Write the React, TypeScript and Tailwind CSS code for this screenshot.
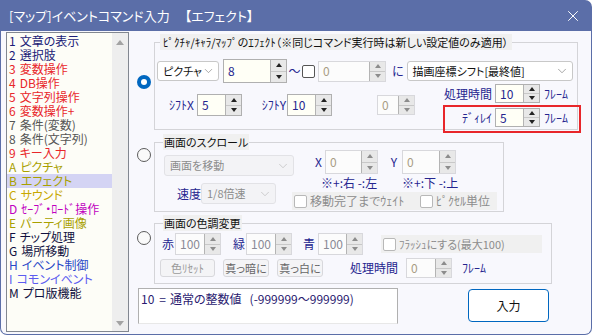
import { ChevronDown, X } from 'lucide-react';

const items: [string, string, string][] = [
  ['1', '文章の表示', 'text-[#1c1c78]'],
  ['2', '選択肢', 'text-[#1c1c78]'],
  ['3', '変数操作', 'text-[#e8262a]'],
  ['4', 'DB操作', 'text-[#e8262a]'],
  ['5', '文字列操作', 'text-[#e8262a]'],
  ['6', '変数操作+', 'text-[#e8262a]'],
  ['7', '条件(変数)', 'text-[#555555]'],
  ['8', '条件(文字列)', 'text-[#555555]'],
  ['9', 'キー入力', 'text-[#e8262a]'],
  ['A', 'ピクチャ', 'text-[#a8a000]'],
  ['B', 'エフェクト', 'text-[#a8a000]'],
  ['C', 'サウンド', 'text-[#c8a800]'],
  ['D', 'ｾｰﾌﾞ・ﾛｰﾄﾞ操作', 'text-[#c000c0]'],
  ['E', 'パーティ画像', 'text-[#a8a000]'],
  ['F', 'チップ処理', 'text-[#101040]'],
  ['G', '場所移動', 'text-[#101040]'],
  ['H', 'イベント制御', 'text-[#2848c8]'],
  ['I', 'コモンイベント', 'text-[#5c5cf0]'],
  ['M', 'プロ版機能', 'text-[#101040]'],
];

function Tri({ up, dim }: { up?: boolean; dim?: boolean }) {
  return (
    <span
      className={`w-0 h-0 border-x-[3.5px] border-x-transparent ${
        up
          ? dim
            ? 'border-b-[4px] border-b-[#8c8c8c]'
            : 'border-b-[4px] border-b-[#222]'
          : dim
          ? 'border-t-[4px] border-t-[#8c8c8c]'
          : 'border-t-[4px] border-t-[#222]'
      }`}
    />
  );
}

function Spin({ v, size, dim = false, tone }: { v: string; size: string; dim?: boolean; tone?: string }) {
  return (
    <div className={`flex shrink-0 border ${dim ? 'border-[#d8d8dc]' : 'border-[#b0b0b0]'} ${size}`}>
      <div
        className={`flex-1 flex items-center pl-[4px] text-[12px] ${
          dim ? 'bg-[#fcfcfc]' : 'bg-[#fffff6]'
        } ${tone ?? (dim ? 'text-[#a89c84]' : 'text-[#25258f]')}`}
      >
        {v}
      </div>
      <div className="w-[16px] flex flex-col border-l border-[#b4b4b4] bg-[#e8e8e8]">
        <div className="flex-1 flex items-center justify-center border-b border-[#c8c8c8]">
          <Tri up dim={dim} />
        </div>
        <div className="flex-1 flex items-center justify-center">
          <Tri dim={dim} />
        </div>
      </div>
    </div>
  );
}

function Sel({ t, size, dim = false }: { t: string; size: string; dim?: boolean }) {
  return (
    <div
      className={`flex items-center justify-between shrink-0 border rounded-[3px] pl-[5px] pr-[3px] ${size} ${
        dim ? 'bg-[#f3f3f6] border-[#e2e2e6] text-[#8c8c8c]' : 'bg-white border-[#c8c8c8] text-[#111]'
      }`}
    >
      <span className="whitespace-nowrap">{t}</span>
      <ChevronDown size={14} strokeWidth={1} className={dim ? 'text-[#b0b0b0]' : 'text-[#666]'} />
    </div>
  );
}

function Check({ dim = false }: { dim?: boolean }) {
  return (
    <span
      className={`w-[13px] h-[13px] shrink-0 rounded-[2px] border bg-white ${
        dim ? 'border-[#b8b8b8]' : 'border-[#555]'
      }`}
    />
  );
}

function Radio({ on = false }: { on?: boolean }) {
  return on ? (
    <span className="w-[14px] h-[14px] rounded-full bg-[#0067c0] flex items-center justify-center">
      <span className="w-[6px] h-[6px] rounded-full bg-white" />
    </span>
  ) : (
    <span className="block w-[14px] h-[14px] rounded-full border border-[#5c5c5c] bg-[#fafafa]" />
  );
}

function Group({
  label,
  lcls,
  cls,
  children,
}: {
  label: string;
  lcls: string;
  cls: string;
  children: React.ReactNode;
}) {
  return (
    <div className={`relative border border-[#d4d4d8] shrink-0 ${cls}`}>
      <span
        className={`absolute -top-[9px] h-[16px] leading-[16px] bg-[#f0f0f0] text-[#111] whitespace-nowrap ${lcls}`}
      >
        {label}
      </span>
      {children}
    </div>
  );
}

export default function App() {
  const navy = 'text-[#25258f] text-[12px] whitespace-nowrap';
  return (
    <div className="w-[592px] h-[335px] flex flex-col bg-white text-[11px] leading-none font-['Noto_Sans_CJK_JP','Noto_Sans',sans-serif] [font-feature-settings:'palt']">
      {/* title bar */}
      <div className="h-[31px] shrink-0 bg-[#5b6ea8] rounded-tr-[7px] flex items-center pl-[9px] pr-[10px] text-white text-[13px]">
        <span>[マップ]イベントコマンド入力</span>
        <span className="ml-[15px]">【エフェクト】</span>
        <X size={18} strokeWidth={1.3} className="ml-auto" />
      </div>

      <div className="flex-1 flex bg-[#f8f8fd] border-x border-b border-[#5b6ea8] rounded-b-[7px]">
        {/* command list */}
        <div className="ml-[5px] mt-[1px] w-[123px] h-[300px] border border-[#828790] bg-[#fdfdf7] flex text-[12px]">
          <div className="flex-1 pt-[1px]">
            {items.map(([k, t, c]) => (
              <div
                key={k}
                className={`flex h-[14px] leading-[14px] pl-[2px] whitespace-nowrap ${c} ${
                  k === 'B' ? 'bg-[#d4d4f4]' : ''
                }`}
              >
                <span>{k}</span>
                <span className="ml-[4px]">{t}</span>
              </div>
            ))}
          </div>
          <div className="w-[16px] bg-[#eeeeee] flex flex-col items-center justify-between pt-[7px] pb-[5px]">
            <span className="w-0 h-0 border-x-[4px] border-x-transparent border-b-[5px] border-b-[#a3a3a3]" />
            <span className="w-0 h-0 border-x-[4px] border-x-transparent border-t-[5px] border-t-[#a3a3a3]" />
          </div>
        </div>

        {/* settings */}
        <div className="flex flex-col pt-[11px] pl-[1px]">
          {/* picture / chara / map effect */}
          <div className="flex">
            <div className="w-[24px] pt-[33px] pl-[7px]">
              <Radio on />
            </div>
            <Group
              label="ﾋﾟｸﾁｬ/ｷｬﾗ/ﾏｯﾌﾟのｴﾌｪｸﾄ（※同じコマンド実行時は新しい設定値のみ適用）"
              lcls="left-[5px] pl-[3px] pr-[4px]"
              cls="w-[424px] h-[88px]"
            >
              <div className="flex items-center mt-[16px] ml-[2px] h-[24px]">
                <Sel t="ピクチャ" size="w-[62px] h-[20px]" />
                <div className="ml-[4px]">
                  <Spin v="8" size="w-[64px] h-[24px]" />
                </div>
                <span className={`w-[15px] text-center ${navy}`}>～</span>
                <Check />
                <div className="ml-[3px]">
                  <Spin v="0" size="w-[68px] h-[21px]" dim />
                </div>
                <span className={`ml-[6px] ${navy}`}>に</span>
                <div className="ml-[3px]">
                  <Sel t="描画座標シフト[最終値]" size="w-[166px] h-[20px]" />
                </div>
              </div>
              <div className="flex items-start">
                <div className="flex items-center mt-[11px] ml-[14px]">
                  <span className={`w-[28px] ${navy}`}>ｼﾌﾄX</span>
                  <Spin v="5" size="w-[45px] h-[22px]" />
                  <span className={`w-[45px] text-right pr-[1px] ${navy}`}>ｼﾌﾄY</span>
                  <Spin v="10" size="w-[45px] h-[22px]" />
                  <div className="ml-[45px]">
                    <Spin v="0" size="w-[38px] h-[20px]" dim />
                  </div>
                </div>
                <div className="flex flex-col mt-[1px] ml-[28px]">
                  <div className="flex items-center w-[130px]">
                    <span className={`w-[52px] text-right pr-[3px] ${navy}`}>処理時間</span>
                    <Spin v="10" size="w-[45px] h-[19px]" />
                    <span className={`ml-[4px] ${navy}`}>ﾌﾚｰﾑ</span>
                  </div>
                  <div className="relative flex items-center w-[130px] mt-[5px]">
                    <span className={`w-[52px] text-right pr-[3px] ${navy}`}>ﾃﾞｨﾚｲ</span>
                    <Spin v="5" size="w-[45px] h-[19px]" />
                    <span className={`ml-[4px] ${navy}`}>ﾌﾚｰﾑ</span>
                    <span className="absolute -top-[3px] -bottom-[6px] left-0 -right-[8px] border-2 border-[#e8262a]" />
                  </div>
                </div>
              </div>
            </Group>
          </div>

          {/* scroll */}
          <div className="flex mt-[12px]">
            <div className="w-[24px] pt-[6px] pl-[7px]">
              <Radio />
            </div>
            <Group label="画面のスクロール" lcls="left-[8px] px-[1px]" cls="w-[350px] h-[70px]">
              <div className="flex">
                <div className="ml-[9px] w-[130px] flex flex-col shrink-0">
                  <div className="mt-[12px]">
                    <Sel t="画面を移動" size="w-[130px] h-[21px]" dim />
                  </div>
                  <div className="flex items-center mt-[7px]">
                    <span className={`w-[37px] pl-[13px] ${navy}`}>速度</span>
                    <Sel t="1/8倍速" size="w-[75px] h-[21px]" dim />
                  </div>
                </div>
                <div className="-ml-[2px] flex flex-col">
                  <div className="flex items-center mt-[7px]">
                    <span className={`w-[33px] text-right pr-[3px] ${navy}`}>X</span>
                    <Spin v="0" size="w-[53px] h-[24px]" dim />
                    <span className={`w-[24px] text-right pr-[5px] ${navy}`}>Y</span>
                    <Spin v="0" size="w-[54px] h-[24px]" dim />
                  </div>
                  <div className={`flex items-center h-[16px] mt-[1px] pl-[29px] ${navy}`}>
                    <span className="w-[81px]">※+:右 -:左</span>
                    <span>※+:下 -:上</span>
                  </div>
                  <div className="mt-[1px] w-[205px] h-[18px] bg-[#f0f0f0] flex items-center text-[#8c8c8c] text-[12px]">
                    <div className="w-[128px] flex items-center pl-[2px]">
                      <Check dim />
                      <span className="ml-[3px] whitespace-nowrap">移動完了までｳｪｲﾄ</span>
                    </div>
                    <Check dim />
                    <span className="ml-[3px] whitespace-nowrap">ﾋﾟｸｾﾙ単位</span>
                  </div>
                </div>
              </div>
            </Group>
          </div>

          {/* color tone */}
          <div className="flex mt-[11px]">
            <div className="w-[24px] pt-[8px] pl-[7px]">
              <Radio />
            </div>
            <Group label="画面の色調変更" lcls="left-[8px] px-[1px]" cls="w-[398px] h-[61px]">
              <div className="flex items-center mt-[9px] h-[22px] ml-[7px]">
                <span className={`w-[13px] ${navy}`}>赤</span>
                <Spin v="100" size="w-[46px] h-[22px]" dim tone="text-[#8a8a96]" />
                <span className={`w-[25px] text-right pr-[1px] ${navy}`}>緑</span>
                <Spin v="100" size="w-[46px] h-[22px]" dim tone="text-[#8a8a96]" />
                <span className={`w-[26px] text-right pr-[3px] ${navy}`}>青</span>
                <Spin v="100" size="w-[45px] h-[22px]" dim tone="text-[#8a8a96]" />
                <div className="ml-[18px] w-[161px] h-[18px] bg-[#f0f0f0] flex items-center pl-[2px] text-[#8c8c8c]">
                  <Check dim />
                  <span className="ml-[3px] whitespace-nowrap">ﾌﾗｯｼｭにする(最大100)</span>
                </div>
              </div>
              <div className="flex items-center mt-[3px] h-[20px] ml-[5px]">
                <span className="w-[55px] h-[18px] flex items-center justify-center border border-[#d8d8dc] rounded-[3px] bg-[#f4f4f6] text-[#9a9a9a]">
                  色ﾘｾｯﾄ
                </span>
                <span className="ml-[8px] w-[46px] h-[18px] flex items-center justify-center border border-[#d8d8dc] rounded-[3px] bg-[#f4f4f6] text-[#666]">
                  真っ暗に
                </span>
                <span className="ml-[8px] w-[46px] h-[18px] flex items-center justify-center border border-[#d8d8dc] rounded-[3px] bg-[#f4f4f6] text-[#666]">
                  真っ白に
                </span>
                <span className={`ml-[27px] w-[56px] ${navy}`}>処理時間</span>
                <Spin v="0" size="w-[46px] h-[20px]" dim />
                <span className={`ml-[10px] ${navy}`}>ﾌﾚｰﾑ</span>
              </div>
            </Group>
          </div>

          {/* description + submit */}
          <div className="flex mt-[4px]">
            <div className="ml-[8px] w-[260px] h-[36px] bg-white border border-[#b0b0b0] border-b-[#e8e8e8] pl-[2px] pt-[3px] leading-[14px] text-[12px] text-[#2a1a70] whitespace-nowrap flex items-start">
              <span>10</span>
              <span className="ml-[5px]">=</span>
              <span className="ml-[4px]">通常の整数値</span>
              <span className="ml-[8px]">(-999999～999999)</span>
            </div>
            <button className="ml-[70px] mt-[1px] w-[81px] h-[33px] border border-[#0067c0] rounded-[4px] bg-white text-[#111] text-[12px]">
              入力
            </button>
          </div>
        </div>
      </div>
    </div>
  );
}
